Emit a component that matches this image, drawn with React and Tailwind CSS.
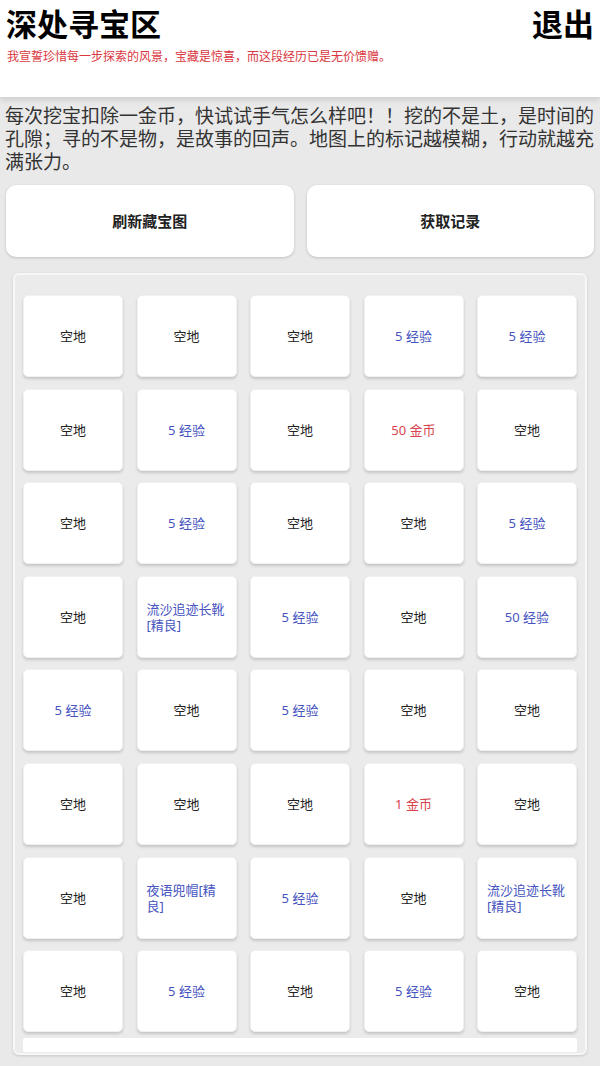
export default function App() {
  // 8 rows x 5 cols of dig results
  const cells = [
    ["空地", "空地", "空地", "5经验", "5经验"],
    ["空地", "5经验", "空地", "50金币", "空地"],
    ["空地", "5经验", "空地", "空地", "5经验"],
    ["空地", "流沙追迹长靴[精良]", "5经验", "空地", "50经验"],
    ["5经验", "空地", "5经验", "空地", "空地"],
    ["空地", "空地", "空地", "1金币", "空地"],
    ["空地", "夜语兜帽[精良]", "5经验", "空地", "流沙追迹长靴[精良]"],
    ["空地", "5经验", "空地", "5经验", "空地"],
  ];

  const colorOf = (t) => {
    if (t === "空地") return "text-[#222222]";
    if (t.includes("金币")) return "text-[#d9434d]";
    return "text-[#4654c0]";
  };

  const pretty = (t) => t.replace(/^(\d+)/, "$1 ");

  return (
    <div
      className="min-h-[1066px] bg-[#e9e9e9]"
      style={{ fontFamily: '"Noto Sans", "Noto Sans CJK SC", sans-serif' }}
    >
      {/* Header */}
      <div className="h-[97px] bg-white px-[6px] pt-[3px] shadow-[0_3px_6px_rgba(0,0,0,0.12)] relative">
        <div className="flex items-center justify-between">
          <h1 className="text-[31px] font-bold leading-[42px] text-black">深处寻宝区</h1>
          <button className="text-[31px] font-bold leading-[42px] text-black">退出</button>
        </div>
        <p className="mt-[3px] text-[12px] leading-[18px] text-[#d9363e] pl-[1px]">
          我宣誓珍惜每一步探索的风景，宝藏是惊喜，而这段经历已是无价馈赠。
        </p>
      </div>

      {/* Intro */}
      <p className="px-[5px] pt-[8px] text-[19px] leading-[23px] text-[#333333]">
        每次挖宝扣除一金币，快试试手气怎么样吧！！挖的不是土，是时间的孔隙；寻的不是物，是故事的回声。地图上的标记越模糊，行动就越充满张力。
      </p>

      {/* Actions */}
      <div className="mt-[11px] flex gap-[13px] px-[6px]">
        <button className="h-[72px] flex-1 rounded-[10px] bg-white text-[15px] font-bold text-[#222222] shadow-[0_1px_3px_rgba(0,0,0,0.18)]">
          刷新藏宝图
        </button>
        <button className="h-[72px] flex-1 rounded-[10px] bg-white text-[15px] font-bold text-[#222222] shadow-[0_1px_3px_rgba(0,0,0,0.18)]">
          获取记录
        </button>
      </div>

      {/* Treasure map */}
      <div className="mx-[13px] mt-[16px] rounded-[6px] border-2 border-[#f7f7f7] bg-[#ebebeb] px-[8px] pt-[20px] pb-[1px] shadow-[0_1px_3px_rgba(0,0,0,0.15)]">
        <div className="grid grid-cols-5 gap-x-[13.5px] gap-y-[11.6px]">
          {cells.flat().map((t, i) => {
            const long = t.length > 5;
            return (
              <div
                key={i}
                className={`h-[82px] rounded-[5px] border border-[#f1f1f1] bg-white shadow-[0_2px_3px_rgba(0,0,0,0.16)] flex items-center px-[9px] ${
                  long ? "justify-start text-left" : "justify-center text-center"
                }`}
              >
                <span className={`text-[13px] leading-[16px] ${colorOf(t)}`}>{pretty(t)}</span>
              </div>
            );
          })}
        </div>
        <div className="mt-[6px] h-[14px] rounded-[2px] bg-white" />
      </div>
    </div>
  );
}
